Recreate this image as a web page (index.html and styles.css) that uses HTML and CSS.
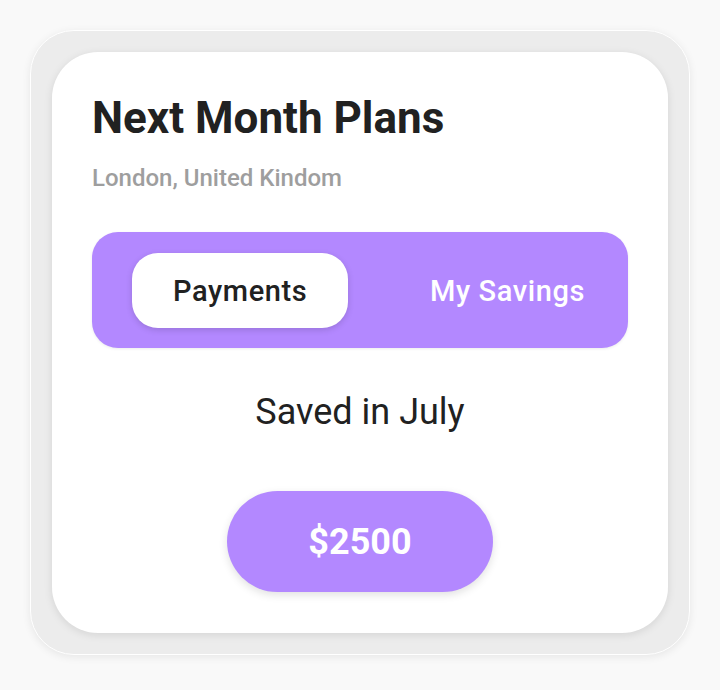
FILE: index.html
```html
<!DOCTYPE html>
<html>
<head>
<meta charset="utf-8">
<link rel="stylesheet" href="styles.css">
</head>
<body>
<div class="outer">
  <div class="card">
    <h1 class="title">Next Month Plans</h1>
    <p class="subtitle">London, United Kindom</p>
    <div class="tabs">
      <div class="tab active">Payments</div>
      <div class="tab">My Savings</div>
    </div>
    <p class="saved">Saved in July</p>
    <div class="amount-wrap">
      <div class="amount">$2500</div>
    </div>
  </div>
</div>
</body>
</html>
```
FILE: styles.css
```css
html, body {
  margin: 0;
  padding: 0;
  background: #f9f9f9;
}
body {
  padding: 30px;
  font-family: Roboto, "Liberation Sans", sans-serif;
}
.outer {
  width: 660px;
  box-sizing: border-box;
  padding: 21px;
  background: #ececec;
  border: 1px solid #ffffff;
  border-radius: 44px;
  box-shadow: 0 2px 8px rgba(0,0,0,0.08);
}
.card {
  background: #ffffff;
  border-radius: 46px;
  padding: 40px 40px 41px 40px;
  box-shadow: 0 2px 8px rgba(0,0,0,0.10);
}
.title {
  margin: 0;
  font-size: 44px;
  font-weight: 700;
  color: #212121;
  line-height: 52px;
}
.subtitle {
  margin: 20px 0 0;
  font-size: 24px;
  font-weight: 500;
  color: #9e9e9e;
  line-height: 28px;
}
.tabs {
  margin-top: 40px;
  display: flex;
  justify-content: space-between;
  align-items: center;
  background: #b388ff;
  border-radius: 26px;
  padding: 21px 2px 20px 40px;
  box-shadow: 0 1px 3px rgba(0,0,0,0.08);
}
.tab {
  height: 75px;
  display: flex;
  align-items: center;
  padding: 0 41px;
  font-size: 29px;
  letter-spacing: 0.6px;
  font-weight: 500;
  color: #ffffff;
  border-radius: 26px;
}
.tab.active {
  background: #ffffff;
  color: #212121;
  box-shadow: 0 2px 6px rgba(0,0,0,0.15);
}
.saved {
  margin: 43px 0 0;
  text-align: center;
  font-size: 36px;
  font-weight: 400;
  color: #212121;
  line-height: 42px;
}
.amount-wrap {
  display: flex;
  justify-content: center;
  margin-top: 58px;
}
.amount {
  width: 266px;
  height: 101px;
  border-radius: 51px;
  background: #b388ff;
  color: #ffffff;
  font-size: 36px;
  font-weight: 700;
  display: flex;
  align-items: center;
  justify-content: center;
  box-shadow: 0 3px 8px rgba(0,0,0,0.12);
}
```
